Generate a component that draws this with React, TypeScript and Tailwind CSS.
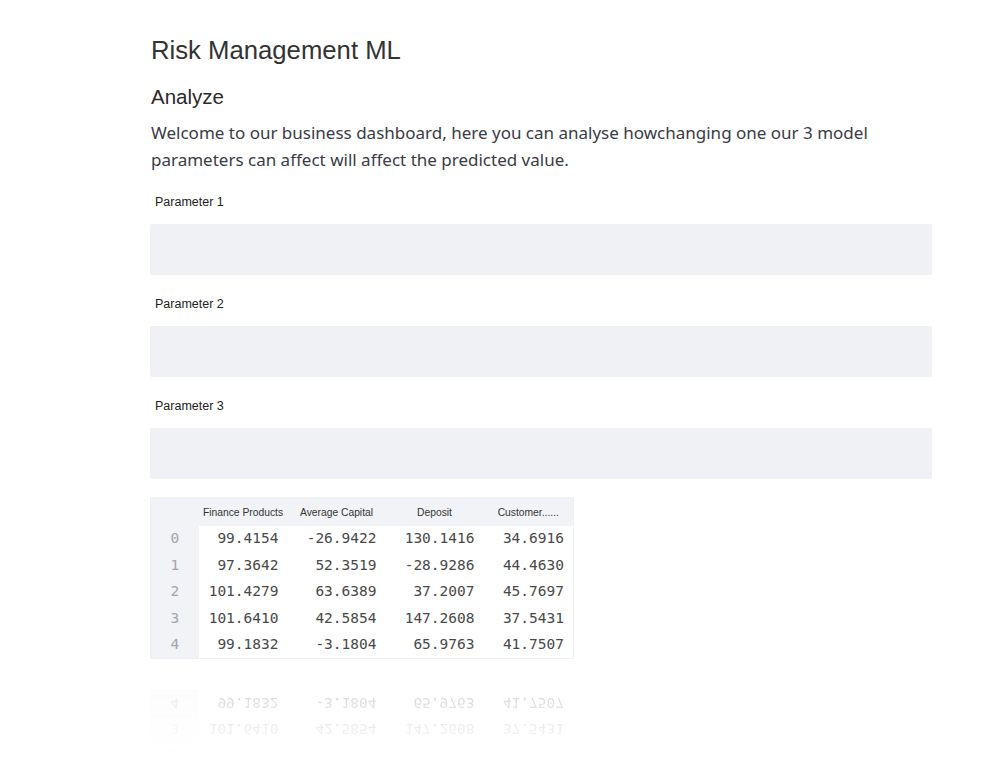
import React from 'react';

const columns = ['Finance Products', 'Average Capital', 'Deposit', 'Customer......'];
const colWidths = ['w-[89px]', 'w-[98px]', 'w-[98px]', 'w-[90px]'];

const rows = [
  ['99.4154', '-26.9422', '130.1416', '34.6916'],
  ['97.3642', '52.3519', '-28.9286', '44.4630'],
  ['101.4279', '63.6389', '37.2007', '45.7697'],
  ['101.6410', '42.5854', '147.2608', '37.5431'],
  ['99.1832', '-3.1804', '65.9763', '41.7507'],
];

function DataTable() {
  return (
    <table className="border-collapse border border-[#eef0f3] table-fixed">
      <thead>
        <tr className="h-[28px] bg-[#f2f3f6]">
          <th className="w-[48px]" />
          {columns.map((c, i) => (
            <th
              key={c}
              className={`${colWidths[i]} text-center font-normal text-[10.3px] text-[#333] font-['Liberation_Sans',sans-serif] pt-[2px]`}
            >
              {c}
            </th>
          ))}
        </tr>
      </thead>
      <tbody>
        {rows.map((r, ri) => (
          <tr key={ri} className="h-[26.6px]">
            <td className="bg-[#f2f3f6] text-center text-[14.5px] text-[#a3a5aa] font-['DejaVu_Sans_Mono',monospace]">
              {ri}
            </td>
            {r.map((v, ci) => (
              <td
                key={ci}
                className="bg-white text-right pr-[9px] text-[14.5px] text-[#484848] font-['DejaVu_Sans_Mono',monospace]"
              >
                {v}
              </td>
            ))}
          </tr>
        ))}
      </tbody>
    </table>
  );
}

function ParamField({ label }: { label: string }) {
  return (
    <div className="flex flex-col">
      <label className="pl-[5px] text-[12.5px] text-[#222] font-['Liberation_Sans',sans-serif] leading-[16px]">
        {label}
      </label>
      <div className="mt-[14px] h-[51px] w-full rounded-[2px] bg-[#f0f1f5]" />
    </div>
  );
}

export default function App() {
  return (
    <div className="min-h-screen bg-white overflow-hidden">
      <div className="pl-[150px] w-[932px] pt-[33px]">
        <h1 className="pl-[1px] text-[25.7px] leading-[34px] text-[#333] font-['Liberation_Sans',sans-serif]">
          Risk Management ML
        </h1>
        <h2 className="mt-[17px] pl-[1px] text-[20.5px] leading-[26px] text-[#2a2a2a] font-['Liberation_Sans',sans-serif]">
          Analyze
        </h2>
        <p className="mt-[9px] pl-[1px] text-[17px] leading-[27px] text-[#3a3b45] font-['Noto_Sans',sans-serif] w-[740px]">
          Welcome to our business dashboard, here you can analyse howchanging one our 3 model parameters can affect will affect the predicted value.
        </p>

        <div className="mt-[21px] flex flex-col gap-[21px]">
          <ParamField label="Parameter 1" />
          <ParamField label="Parameter 2" />
          <ParamField label="Parameter 3" />
        </div>

        <div className="mt-[18px]">
          <DataTable />
        </div>

        <div className="mt-[31px] h-[64px] overflow-hidden opacity-[0.22] [mask-image:linear-gradient(to_bottom,black,transparent)]">
          <div className="scale-y-[-1] origin-top translate-y-[160px]">
            <DataTable />
          </div>
        </div>
      </div>
    </div>
  );
}
